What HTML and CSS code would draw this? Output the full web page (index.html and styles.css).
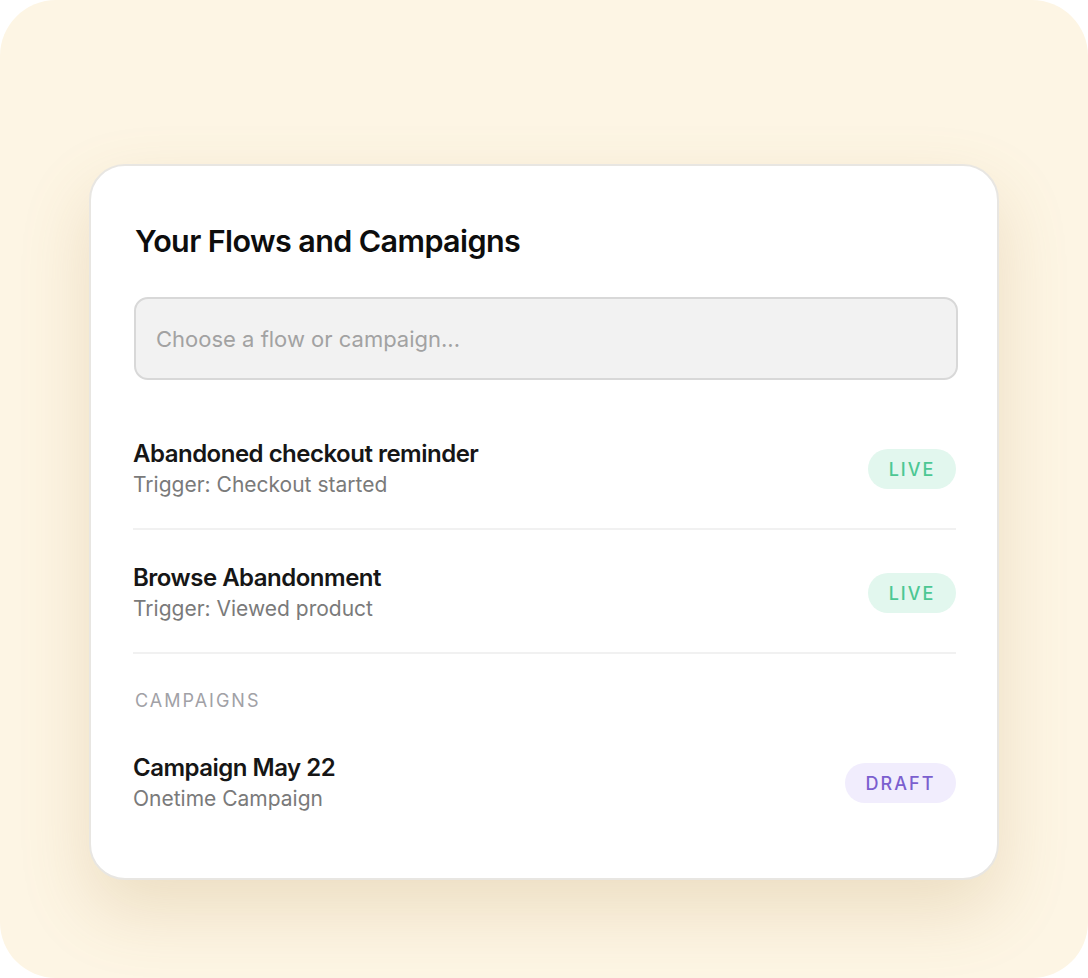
FILE: index.html
```html
<!DOCTYPE html>
<html>
<head>
<meta charset="utf-8">
<link rel="stylesheet" href="styles.css">
</head>
<body>
<div class="stage">
  <div class="card">
    <h1 class="title">Your Flows and Campaigns</h1>
    <div class="select">Choose a flow or campaign...</div>
    <div class="list">
      <div class="row">
        <div class="info">
          <div class="name">Abandoned checkout reminder</div>
          <div class="sub">Trigger: Checkout started</div>
        </div>
        <span class="badge live">LIVE</span>
      </div>
      <div class="row">
        <div class="info">
          <div class="name">Browse Abandonment</div>
          <div class="sub">Trigger: Viewed product</div>
        </div>
        <span class="badge live">LIVE</span>
      </div>
      <div class="section">CAMPAIGNS</div>
      <div class="row last">
        <div class="info">
          <div class="name">Campaign May 22</div>
          <div class="sub">Onetime Campaign</div>
        </div>
        <span class="badge draft">DRAFT</span>
      </div>
    </div>
  </div>
</div>
</body>
</html>
```
FILE: styles.css
```css
html, body {
  margin: 0;
  padding: 0;
  background: #ffffff;
}
body {
  font-family: Inter, "Noto Sans", sans-serif;
  -webkit-font-smoothing: antialiased;
}
.stage {
  width: 1088px;
  height: 978px;
  box-sizing: border-box;
  background: #fdf5e4;
  border-radius: 56px;
  padding-top: 164px;
  display: flex;
  justify-content: center;
  align-items: flex-start;
}
.card {
  width: 910px;
  height: 716px;
  box-sizing: border-box;
  background: #ffffff;
  border: 2px solid #e8e6e2;
  border-radius: 36px;
  box-shadow: 0 30px 70px rgba(170, 130, 60, 0.2);
  padding: 55px 41px 0 41px;
}
.title {
  margin: 0 0 0 3px;
  font-size: 30.5px;
  line-height: 40px;
  font-weight: 600;
  letter-spacing: -0.6px;
  color: #0d0d0d;
}
.select {
  margin: 36px -2px 0 2px;
  height: 83px;
  box-sizing: border-box;
  background: #f2f2f2;
  border: 2px solid #d8d8d8;
  border-radius: 14px;
  display: flex;
  align-items: center;
  padding-left: 20px;
  font-size: 22px;
  color: #a2a2a2;
}
.list {
  margin: 58px 0 0 1px;
}
.row {
  display: flex;
  align-items: center;
  justify-content: space-between;
  padding: 0 0 28px;
  border-bottom: 2px solid #f1f1f1;
  margin-bottom: 32px;
}
.row.last {
  border-bottom: none;
  margin-bottom: 0;
}
.name {
  font-size: 24px;
  line-height: 31px;
  font-weight: 600;
  letter-spacing: -0.5px;
  color: #161616;
}
.sub {
  font-size: 21px;
  line-height: 31px;
  color: #7a7a7a;
}
.badge {
  height: 40px;
  border-radius: 20px;
  display: inline-flex;
  align-items: center;
  justify-content: center;
  font-size: 18px;
  font-weight: 500;
  letter-spacing: 2px;
  box-sizing: border-box;
}
.badge.live {
  width: 88px;
  background: #e2f7ee;
  color: #4cc793;
}
.badge.draft {
  width: 111px;
  background: #f1edfd;
  color: #7b5fcf;
}
.section {
  font-size: 18px;
  line-height: 29px;
  letter-spacing: 2px;
  color: #a1a1a6;
  margin: 0 0 37px 2px;
}
```
